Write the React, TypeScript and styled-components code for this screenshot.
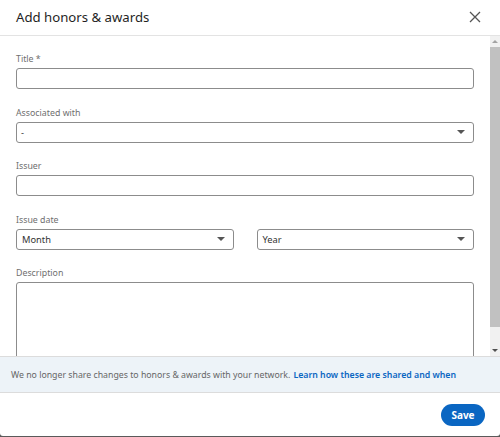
import styled, { createGlobalStyle } from 'styled-components';

const GlobalStyle = createGlobalStyle`
  * { box-sizing: border-box; }
  html, body {
    margin: 0;
    padding: 0;
    background: #5a5a5a;
    font-family: "Noto Sans", "Open Sans", sans-serif;
  }
`;

const Modal = styled.div`
  width: 500px;
  height: 436px;
  background: #fff;
  border-radius: 0 0 3px 3px;
  display: flex;
  flex-direction: column;
  overflow: hidden;
`;

const Header = styled.div`
  height: 36px;
  flex: none;
  display: flex;
  align-items: center;
  justify-content: space-between;
  padding: 0 16px 1px 16px;
  border-bottom: 1px solid #e3e3e3;
`;

const Title = styled.h2`
  margin: 0;
  font-size: 13.2px;
  font-weight: 400;
  color: #1f1f1f;
`;

const CloseButton = styled.button`
  border: 0;
  background: none;
  padding: 0;
  width: 14px;
  height: 14px;
  display: flex;
  align-items: center;
  justify-content: center;
  margin-right: 2px;
  color: #555;
`;

const BodyRow = styled.div`
  height: 320px;
  flex: none;
  display: flex;
`;

const FormArea = styled.div`
  flex: 1;
  overflow: hidden;
  padding: 16px 16px 0 16px;
  display: flex;
  flex-direction: column;
  gap: 16.5px;
`;

const Field = styled.div`
  display: flex;
  flex-direction: column;
  gap: 2px;
`;

const Label = styled.label`
  font-size: 8.8px;
  line-height: 14px;
  color: #6f6f6f;
`;

const DateRow = styled.div`
  display: grid;
  grid-template-columns: 1fr 1fr;
  gap: 23px;
`;

const boxBase = `
  width: 100%;
  border: 1px solid #8c8c8c;
  border-radius: 3px;
  background: #fff;
`;

const TextInput = styled.div`
  ${boxBase}
  height: 21px;
`;

const TextArea = styled.div`
  ${boxBase}
  height: 100px;
  flex: none;
`;

const SelectBox = styled.div<{ $pad: number }>`
  ${boxBase}
  height: 21px;
  display: flex;
  align-items: center;
  justify-content: space-between;
  padding: 0 8px 0 ${(p) => p.$pad}px;
  font-size: 9.3px;
  color: #333;
`;

const Caret = styled.span`
  width: 0;
  height: 0;
  border-left: 4.5px solid transparent;
  border-right: 4.5px solid transparent;
  border-top: 4.5px solid #555;
`;

const ScrollTrack = styled.div`
  width: 10px;
  flex: none;
  background: #f1f1f1;
  display: flex;
  flex-direction: column;
  align-items: center;
`;

const ScrollArrow = styled.div<{ $up?: boolean }>`
  height: 11px;
  flex: none;
  display: flex;
  align-items: center;
  justify-content: center;
  &::after {
    content: '';
    width: 0;
    height: 0;
    border-left: 3px solid transparent;
    border-right: 3px solid transparent;
    ${(p) =>
      p.$up ? 'border-bottom: 3px solid #a3a3a3;' : 'border-top: 3px solid #505050;'}
  }
`;

const ScrollThumb = styled.div`
  width: 10px;
  height: 280px;
  background: #c1c1c1;
`;

const Spacer = styled.div`
  flex: 1;
`;

const Notice = styled.div`
  height: 37px;
  flex: none;
  background: #edf3f8;
  border-top: 1px solid #dcdcdc;
  border-bottom: 1px solid #dcdcdc;
  display: flex;
  align-items: center;
  padding: 0 11px;
  font-size: 8.75px;
  color: #666;
  white-space: nowrap;
`;

const NoticeLink = styled.a`
  color: #0a66c2;
  font-weight: 600;
  text-decoration: none;
  margin-left: 3px;
`;

const Footer = styled.div`
  flex: 1;
  display: flex;
  align-items: center;
  justify-content: flex-end;
  padding: 0 15px 0 0;
`;

const SaveButton = styled.button`
  width: 44px;
  height: 22px;
  border: 0;
  border-radius: 11px;
  background: #0a66c2;
  color: #fff;
  font-family: inherit;
  font-size: 10px;
  font-weight: 700;
  padding: 0;
`;

const CloseIcon = () => (
  <svg width="12" height="12" viewBox="0 0 12 12" fill="none">
    <path d="M1 1 L11 11 M11 1 L1 11" stroke="currentColor" strokeWidth="1.3" />
  </svg>
);

export default function App() {
  return (
    <>
      <GlobalStyle />
      <Modal>
        <Header>
          <Title>Add honors &amp; awards</Title>
          <CloseButton aria-label="Dismiss">
            <CloseIcon />
          </CloseButton>
        </Header>
        <BodyRow>
          <FormArea>
            <Field>
              <Label>Title *</Label>
              <TextInput />
            </Field>
            <Field>
              <Label>Associated with</Label>
              <SelectBox $pad={4}>
                <span>-</span>
                <Caret />
              </SelectBox>
            </Field>
            <Field>
              <Label>Issuer</Label>
              <TextInput />
            </Field>
            <Field>
              <Label>Issue date</Label>
              <DateRow>
                <SelectBox $pad={5}>
                  <span>Month</span>
                  <Caret />
                </SelectBox>
                <SelectBox $pad={5}>
                  <span>Year</span>
                  <Caret />
                </SelectBox>
              </DateRow>
            </Field>
            <Field>
              <Label>Description</Label>
              <TextArea />
            </Field>
          </FormArea>
          <ScrollTrack>
            <ScrollArrow $up />
            <ScrollThumb />
            <Spacer />
            <ScrollArrow />
          </ScrollTrack>
        </BodyRow>
        <Notice>
          We no longer share changes to honors &amp; awards with your network.
          <NoticeLink href="#">Learn how these are shared and when</NoticeLink>
        </Notice>
        <Footer>
          <SaveButton>Save</SaveButton>
        </Footer>
      </Modal>
    </>
  );
}
